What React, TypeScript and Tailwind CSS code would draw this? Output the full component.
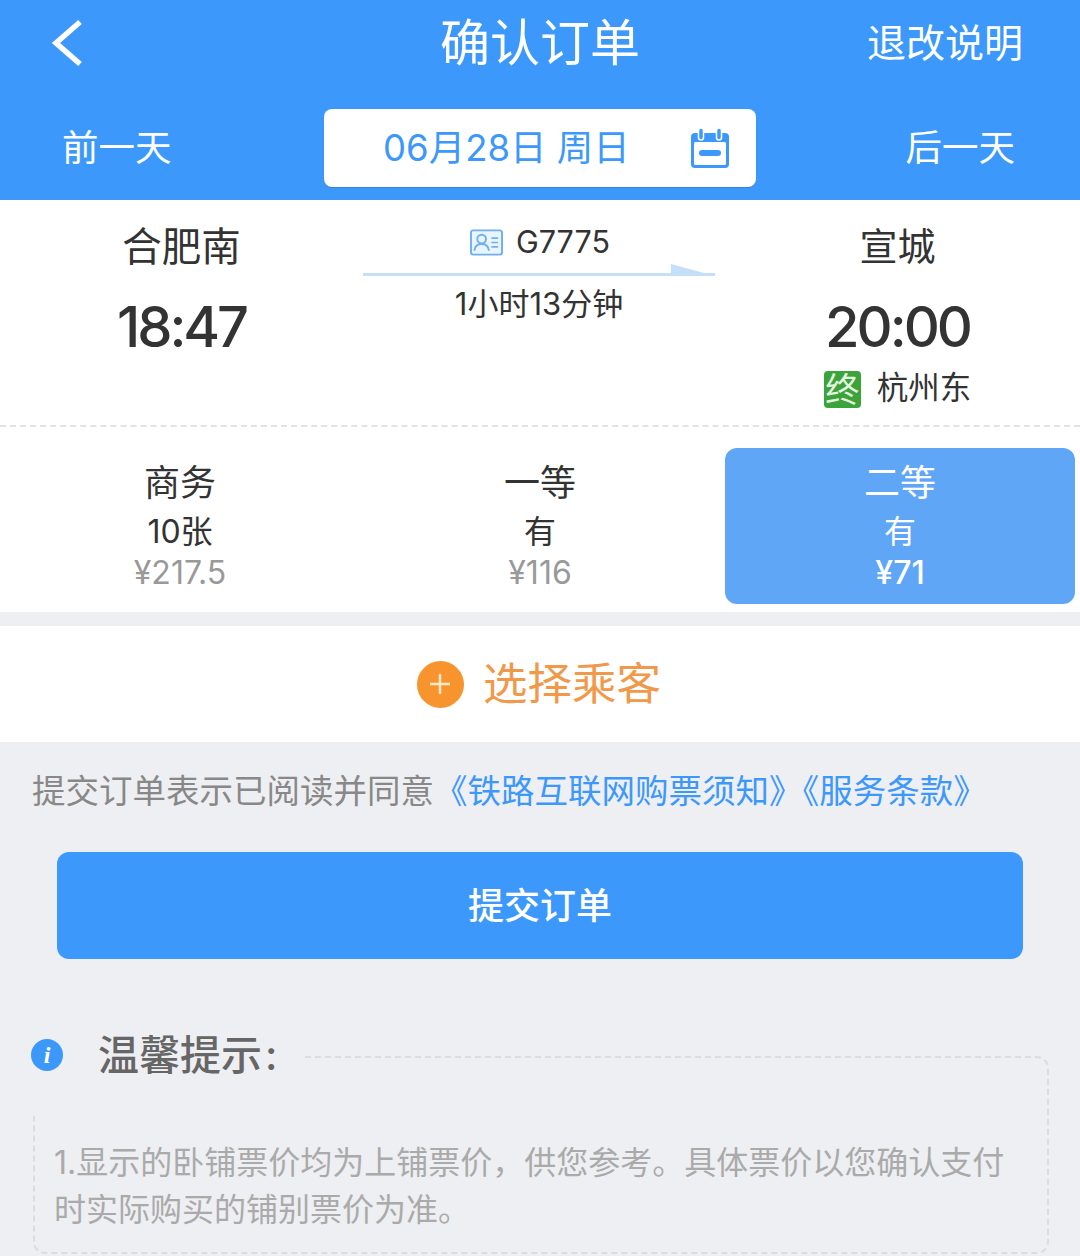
const seats = [
  { name: "商务", count: "10张", price: "¥217.5" },
  { name: "一等", count: "有", price: "¥116" },
  { name: "二等", count: "有", price: "¥71", active: true },
]

function BackIcon() {
  return (
    <svg width="34" height="48" viewBox="0 0 34 48" fill="none">
      <path d="M30 3 L6 24 L30 45" stroke="#fff" strokeWidth="5.500" strokeLinecap="butt" strokeLinejoin="miter" />
    </svg>
  )
}

function PlusIcon() {
  return (
    <svg width="24" height="24" viewBox="0 0 24 24" fill="none" stroke="#fde9c9" strokeWidth="2.500">
      <path d="M12 2v20M2 12h20" />
    </svg>
  )
}

function CalendarIcon() {
  return (
    <svg width="42" height="42" viewBox="0 0 42 42" fill="none">
      <rect x="2" y="6" width="38" height="35" rx="4" fill="#3d98fb" />
      <rect x="5" y="15" width="32" height="23" rx="1.500" fill="#fff" />
      <rect x="9.500" y="1" width="5" height="12" rx="2.500" fill="#3d98fb" stroke="#fff" strokeWidth="1.500" />
      <rect x="27.500" y="1" width="5" height="12" rx="2.500" fill="#3d98fb" stroke="#fff" strokeWidth="1.500" />
      <rect x="10" y="23" width="22" height="6" rx="3" fill="#3d98fb" />
    </svg>
  )
}

function TrainIdIcon() {
  return (
    <svg width="33" height="27" viewBox="0 0 34 27" fill="none" stroke="#6fb0ee" strokeWidth="2">
      <rect x="1" y="1" width="32" height="25" rx="2.500" fill="#eaf4fd" />
      <circle cx="12" cy="10" r="4.500" />
      <path d="M4.500 22c.5-5 3.500-7 7.500-7s7 2 7.500 7" />
      <path d="M22 9h7M22 13.500h7M22 18h7" strokeWidth="1.600" />
    </svg>
  )
}

export default function App() {
  return (
    <div className="w-[1080px] h-[1256px] overflow-hidden bg-[#eeeff2] font-['Inter','Noto_Sans_CJK_SC',sans-serif] text-[#333]">
      <header className="h-[200px] bg-[#3d98fb] text-white">
        <div className="relative flex h-[85px] items-center justify-between pl-[50px] pr-[57px]">
          <BackIcon />
          <h1 className="absolute left-0 right-0 text-center text-[50px] leading-none">确认订单</h1>
          <span className="text-[39px] leading-none">退改说明</span>
        </div>
        <div className="mt-[24px] flex items-center justify-between px-[64px]">
          <span className="-ml-[2px] mr-[2px] text-[36.500px] leading-none">前一天</span>
          <div className="flex h-[78px] w-[432px] items-center rounded-lg bg-white pl-[59px] pr-[25px] shadow-[0_1px_1px_rgba(0,0,0,0.15)]">
            <span className="flex-1 text-[36.500px] leading-none text-[#3d98fb]">06月28日 周日</span>
            <CalendarIcon />
          </div>
          <span className="-ml-[1px] mr-[1px] text-[36.500px] leading-none">后一天</span>
        </div>
      </header>

      <section className="flex h-[225px] bg-white">
        <div className="flex w-[363px] flex-col items-center pt-[27px]">
          <span className="text-[39.500px] leading-[40px]">合肥南</span>
          <span className="mt-[32px] text-[56px] font-medium leading-[56px] tracking-[-3px]">18:47</span>
        </div>
        <div className="flex w-[352px] flex-col items-center pt-[24px]">
          <div className="flex items-center gap-[13px] pl-[2px] text-[30.500px] leading-[36px]">
            <TrainIdIcon />
            <span>G7775</span>
          </div>
          <div className="relative mt-[13px] h-[3px] w-full bg-[#c4e0f8]">
            <div className="absolute bottom-0 right-0 h-0 w-0 border-b-[12px] border-l-[44px] border-b-[#c4e0f8] border-l-transparent [transform:scaleX(-1)]" />
          </div>
          <span className="mt-[10px] text-[31px] leading-[36px]">1小时13分钟</span>
        </div>
        <div className="flex flex-1 flex-col items-center pt-[26px]">
          <span className="text-[38px] leading-[40px]">宣城</span>
          <span className="mt-[33px] text-[56px] font-medium leading-[56px] tracking-[-3px]">20:00</span>
          <div className="mt-[16px] flex items-center gap-[16px]">
            <span className="flex h-[37px] w-[37px] items-center justify-center rounded-[4px] bg-[#3aa33a] text-[34px] leading-none text-[#e6f5e0]">终</span>
            <span className="mb-[4px] text-[31.500px] leading-none">杭州东</span>
          </div>
        </div>
      </section>

      <section className="border-t-2 border-dashed border-[#e3e3e3] bg-white">
        <div className="flex h-[185px] pt-[21px]">
          {seats.map((s) => (
            <div
              key={s.name}
              className={
                s.active
                  ? "ml-[5px] flex h-[156px] w-[350px] flex-col items-center rounded-xl bg-[#60a6f6] pt-[13px] text-white"
                  : "flex h-[156px] w-[360px] flex-col items-center pt-[13px]"
              }
            >
              <span className="text-[36px] leading-[44px]">{s.name}</span>
              <span className="mt-[7px] text-[32px] leading-[40px]">{s.count}</span>
              <span className={s.active ? "mt-[1px] text-[32px] font-medium leading-[40px]" : "mt-[1px] text-[32px] leading-[40px] text-[#999]"}>{s.price}</span>
            </div>
          ))}
        </div>
      </section>

      <div className="mt-[14px] flex h-[116px] items-center justify-center gap-[19px] bg-white pr-[2px]">
        <span className="flex h-[47px] w-[47px] items-center justify-center rounded-full bg-[#f7942e]">
          <PlusIcon />
        </span>
        <span className="text-[44.500px] leading-none text-[#f0994a]">选择乘客</span>
      </div>

      <p className="mt-[28px] whitespace-nowrap pl-[32px] text-[33.500px] leading-[42px] text-[#888]">
        提交订单表示已阅读并同意<span className="text-[#3d98fb]">《铁路互联网购票须知》《服务条款》</span>
      </p>

      <button type="button" className="ml-[57px] mt-[40px] block h-[107px] w-[966px] rounded-xl bg-[#3d98fb] text-[36px] font-medium text-white">
        提交订单
      </button>

      <div className="relative ml-[33px] mt-[97px] h-[198px] w-[1016px] rounded-xl border-2 border-dashed border-[#dcdcdf] pl-[19px] pr-[36px] pt-[81px]">
        <div className="absolute -left-[35px] -top-[32px] flex h-[90px] w-[305px] items-start gap-[35px] bg-[#eeeff2] pl-[31px] pt-[5px]">
          <span className="mt-[8px] flex h-[32px] w-[32px] items-center justify-center rounded-full bg-[#3d98fb] font-['Liberation_Serif',serif] text-[24px] font-bold italic leading-none text-white">i</span>
          <span className="text-[41px] font-medium leading-[48px] text-[#666]">温馨提示<span className="ml-[3px]">:</span></span>
        </div>
        <p className="text-[32px] leading-[47px] text-[#aaa]">
          {"1.显示的卧铺票价均为上铺票价\uFF0C供您参考。具体票价以您确认支付时实际购买的铺别票价为准。"}
        </p>
      </div>
    </div>
  )
}
